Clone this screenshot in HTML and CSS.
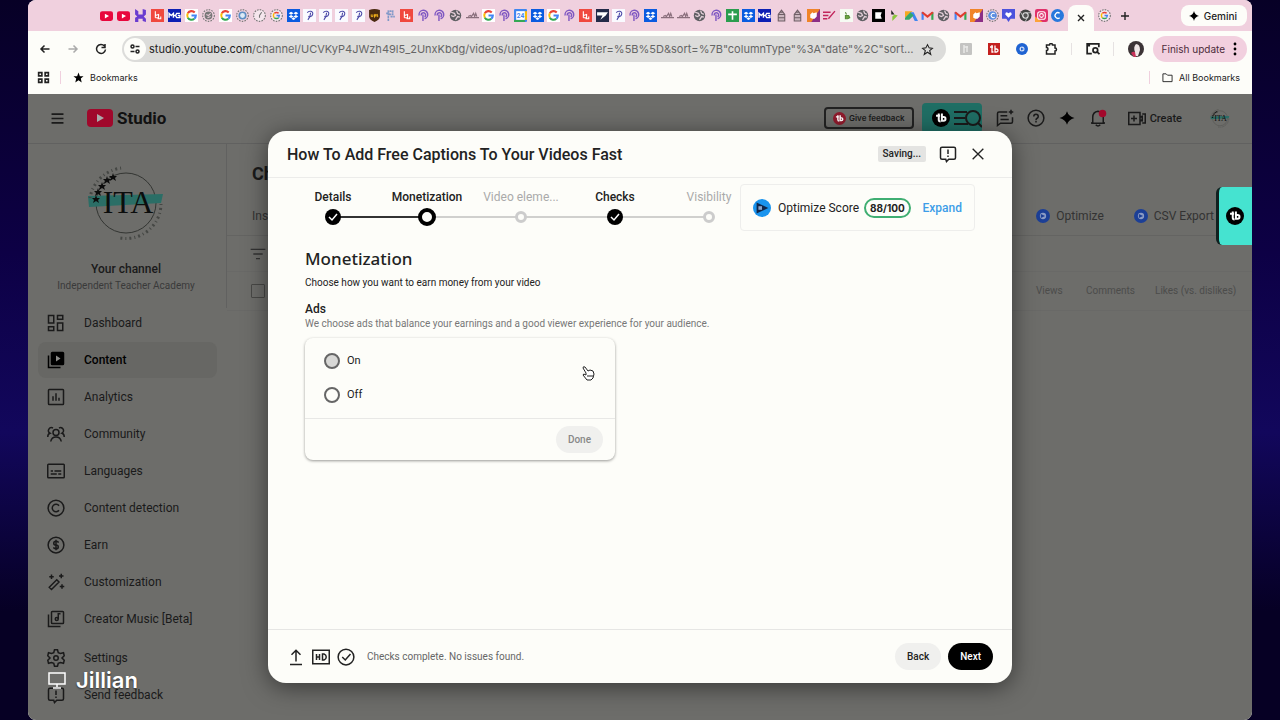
FILE: index.html
```
<!DOCTYPE html>
<html lang="en">
<head>
    <meta charset="UTF-8">
    <meta name="viewport" content="width=device-width, initial-scale=1.0">
    <title>Channel content - YouTube Studio</title>
    <link rel="stylesheet" href="styles.css">
</head>
<body>
    <!-- Favicons and logos used several times -->
    <svg class="sprite" aria-hidden="true">
        <symbol id="f-yt" viewBox="0 0 12 12"><rect y="2" width="12" height="9" rx="2" fill="#e8063c"/><path d="M4.500 4.300v4.400L8.300 6.500z" fill="#fff"/></symbol>
        <symbol id="f-h" viewBox="0 0 12 12"><path d="M1 0l3 2v3h4V2L8 0l3 1v4L9 7H3L1 5zM1 12V8l2-1h6l2 2v3l-3-1V9H4v3z" fill="#6a3bd0"/></symbol>
        <symbol id="f-red" viewBox="0 0 12 12"><rect width="12" height="12" fill="#f0483e"/><path d="M4 2v6M4 6l3-1v3H4M6 9h3V7" fill="none" stroke="#fff"/></symbol>
        <symbol id="f-mg" viewBox="0 0 12 12"><rect width="12" height="12" fill="#0d1fb4"/><path d="M1 8V4l2 2 2-2v4M5 6h2M11 4H8L7 6l1 2h3V6H9" fill="none" stroke="#fff" stroke-width="1.300"/></symbol>
        <symbol id="f-g" viewBox="0 0 12 12"><rect width="12" height="12" fill="#fff"/><g fill="none" stroke-width="1.900"><path d="M9 3.200A4 4 0 0 0 2.600 4" stroke="#ea4335"/><path d="M2.600 4a4 4 0 0 0 0 4" stroke="#fbbc05"/><path d="M2.600 8A4 4 0 0 0 8.600 9" stroke="#34a853"/><path d="M8.600 9A4 4 0 0 0 10 6H6" stroke="#4285f4"/></g></symbol>
        <symbol id="f-dash" viewBox="0 0 12 12"><circle cx="6" cy="6" r="5.400" fill="none" stroke="#777" stroke-dasharray="1.500 1"/><circle cx="6" cy="6" r="3.600" fill="#777"/><path d="M4 5l2 1 2-2M5 8l3-1" stroke="#e3c6d3" fill="none"/></symbol>
        <symbol id="f-dashblue" viewBox="0 0 12 12"><circle cx="6" cy="6" r="5.400" fill="none" stroke="#777" stroke-dasharray="1.500 1"/><circle cx="6" cy="6" r="3" fill="#dceaf6" stroke="#5d8fc4" stroke-width="1.500"/></symbol>
        <symbol id="f-clock" viewBox="0 0 12 12"><circle cx="6" cy="6" r="5.400" fill="#f5e6ed" stroke="#777" stroke-dasharray="1.500 1"/><path d="M8 3L6 6v2" stroke="#777" fill="none"/></symbol>
        <symbol id="f-dashg" viewBox="0 0 12 12"><circle cx="6" cy="6" r="5.400" fill="#f5e6ed" stroke="#777" stroke-dasharray="1.500 1"/><g fill="none" stroke-width="1.300"><path d="M8 4a2.800 2.800 0 0 0-4 0" stroke="#ea4335"/><path d="M4 4a2.800 2.800 0 0 0 0 4" stroke="#fbbc05"/><path d="M4 8a2.800 2.800 0 0 0 4 0" stroke="#34a853"/><path d="M8 8l.6-2H6" stroke="#4285f4"/></g></symbol>
        <symbol id="f-box" viewBox="0 0 12 12"><rect width="12" height="12" fill="#0a5be0"/><path d="M3.800 2.500L6 4 3.800 5.400 1.600 4zM8.200 2.500L10.400 4 8.200 5.400 6 4zM3.800 5.600L6 7 3.800 8.400 1.600 7zM8.200 5.600L10.400 7 8.200 8.400 6 7zM6 7.600l2 1.300-2 1.300-2-1.300z" fill="#fff"/></symbol>
        <symbol id="f-p" viewBox="0 0 12 12"><rect width="12" height="12" fill="#fafaff"/><path d="M4 3.500c1-2 5.500-2 5 1S6 7.500 5 6.500M7 3.500Q7 7 4.500 10" fill="none" stroke="#4c4aa8"/></symbol>
        <symbol id="f-ups" viewBox="0 0 12 12"><path d="M1 1q5-2 10 0v6q0 3-5 5-5-2-5-5z" fill="#4a2a10"/><path d="M3 5v2h1.500V5M6 8V5h1v2M9 5H8v1h1v1H8" fill="none" stroke="#f3b21b" stroke-width=".9"/></symbol>
        <symbol id="f-pf" viewBox="0 0 12 12"><path d="M4 11V2h4v3H4M2 4h3M6 7h4" fill="none" stroke="#7f98c8" stroke-width="1.500" stroke-dasharray="2 .5"/></symbol>
        <symbol id="f-pod" viewBox="0 0 12 12"><path d="M2 6a4 4 0 1 1 5 3M4 6a2 2 0 1 1 3 1.200M5.500 5v6" fill="none" stroke="#7e57c2" stroke-width="1.300"/></symbol>
        <symbol id="f-globe" viewBox="0 0 12 12"><circle cx="6" cy="6" r="5.300" fill="#5f5f63"/><path d="M2 3l3 1 1 2-2 1-2-1M7 1.500L8 4l2 1M6 10l2-3 2 .5" fill="none" stroke="#e3cfd8" stroke-width="1.200"/></symbol>
        <symbol id="f-sig" viewBox="0 0 12 12"><path d="M0 8h12M2 7l2-1 1 1 2-3 1 3 1-3 1 3" fill="none" stroke="#8a6f7c" stroke-width="1.100"/></symbol>
        <symbol id="f-cal" viewBox="0 0 12 12"><rect width="12" height="12" rx="1" fill="#3f86f0"/><path d="M10 2h2v8h-2z" fill="#fbbc05"/><path d="M0 10h10v2H0z" fill="#34a853"/><rect x="2" y="2" width="8" height="8" fill="#fff"/><text x="6" y="8.500" text-anchor="middle" font-family="Roboto, sans-serif" font-size="6" font-weight="700" fill="#3f86f0">24</text></symbol>
        <symbol id="f-usps" viewBox="0 0 12 12"><rect width="12" height="12" fill="#232a48"/><path d="M1 3h10L9 6 4 10l2-4H1z" fill="#fff"/></symbol>
        <symbol id="f-sheet" viewBox="0 0 12 12"><rect width="12" height="12" fill="#2a9d4e"/><path d="M6 2v8M2 5h8" stroke="#fff" stroke-width="1.500"/></symbol>
        <symbol id="f-house" viewBox="0 0 12 12"><path d="M3 11V5l3-4 3 4v6zM3 5h6M3 8h6M5 3h3" fill="#cbb6bf" stroke="#6f5f66"/></symbol>
        <symbol id="f-orange" viewBox="0 0 12 12"><rect width="12" height="12" fill="#f08428"/><path d="M12 0v12H4z" fill="#8c2e86"/><path d="M3 5l2-2 1 1 3-1v4l-2 2H5L3 8z" fill="#fff"/></symbol>
        <symbol id="f-pen" viewBox="0 0 12 12"><path d="M0 3h7M0 6h5M0 9h4M5 9l6-7" fill="none" stroke="#c2255c" stroke-width="1.300"/></symbol>
        <symbol id="f-leaf" viewBox="0 0 12 12"><rect width="12" height="12" fill="#f6fbf3"/><path d="M5 3l1 2M5 6h3l1 2-2 1H5z" stroke="#578b39" fill="#6ca63f"/></symbol>
        <symbol id="f-black" viewBox="0 0 12 12"><rect width="12" height="12" fill="#000"/><path d="M3 3h6l-1 3 1 3H3z" fill="#fff"/></symbol>
        <symbol id="f-arrow" viewBox="0 0 12 12"><path d="M3 1l3 4H3z" fill="#222"/><path d="M4 11l5-5-3-1-2 2z" fill="#8cc63f"/></symbol>
        <symbol id="f-maps" viewBox="0 0 12 12"><path d="M0 2h7L0 8z" fill="#f6a821"/><path d="M5 3h3l4 8H9z" fill="#3f86f0"/><path d="M0 8l5-5 3 3-4 4H0z" fill="#36a76a"/></symbol>
        <symbol id="f-gmail" viewBox="0 0 12 12"><path d="M1.500 10V3" stroke="#4285f4" stroke-width="2"/><path d="M10.500 10V3" stroke="#34a853" stroke-width="2"/><path d="M1 3l5 4 5-4" fill="none" stroke="#e23c30" stroke-width="2"/></symbol>
        <symbol id="f-cblue" viewBox="0 0 12 12"><circle cx="6" cy="6" r="5.400" fill="none" stroke="#777" stroke-dasharray="1.500 1"/><circle cx="6" cy="6" r="4" fill="#5a8ee0"/><path d="M8 4.500a2 2 0 1 0 0 3" fill="none" stroke="#fff"/></symbol>
        <symbol id="f-heart" viewBox="0 0 12 12"><path d="M0 0h12v9H8l-2 3-2-3H0z" fill="#4b52dd"/><path d="M6 8L3 5q0-2 1.500-2L6 4l1.500-1Q9 3 9 5z" fill="#fff"/></symbol>
        <symbol id="f-chrome" viewBox="0 0 12 12"><circle cx="6" cy="6" r="5.500" fill="#444"/><circle cx="6" cy="6" r="2.500" fill="#555" stroke="#ddd"/><path d="M6 3.500h5M4 7.500L1.500 3M8 7.500L5.500 12" stroke="#ddd" stroke-width=".7"/></symbol>
        <symbol id="f-insta" viewBox="0 0 12 12"><rect width="12" height="12" rx="2" fill="#e0306a"/><path d="M0 12V7l7 5z" fill="#fca23a"/><rect x="2.500" y="2.500" width="7" height="7" rx="2" fill="none" stroke="#fff"/><circle cx="6" cy="6" r="1.700" fill="none" stroke="#fff"/></symbol>
        <symbol id="f-canva" viewBox="0 0 12 12"><circle cx="6" cy="6" r="6" fill="#2878dc"/><path d="M8 4a2.600 2.600 0 1 0 0 4" fill="none" stroke="#fff" stroke-width="1.200"/></symbol>
        <symbol id="tb" viewBox="0 0 20 20"><circle cx="10" cy="10" r="10"/><path d="M7.500 5v7q0 2 2 2M4.500 7.500H9M11 5v8h2a2 2 0 0 0 0-4h-2" fill="none" stroke="#fff" stroke-width="2.200"/></symbol>
        <symbol id="vid" viewBox="0 0 20 20"><circle cx="10" cy="10" r="10" fill="#1c3f96"/><circle cx="10" cy="10" r="4.500" fill="#8b9bc4"/><path d="M7 7l6 3-6 3z" fill="#1c3f96"/></symbol>
        <symbol id="feedback" viewBox="0 0 24 24"><path d="M4 3h16a2 2 0 0 1 2 2v12a2 2 0 0 1-2 2h-7l-3 3-1-3H4a2 2 0 0 1-2-2V5a2 2 0 0 1 2-2zM12 6v6M12 14v2"/></symbol>
        <symbol id="ita" viewBox="0 0 80 80">
            <circle cx="40" cy="41" r="30" fill="none" stroke="#333532" stroke-width="1"/>
            <path d="M2 34l75-2-2 9-72 4z" fill="#2b6e66"/>
            <path d="M4 36A36 36 0 0 1 36 6M75 42A35 35 0 0 1 34 76" fill="none" stroke="#454744" stroke-width="3" stroke-dasharray="1 3 2 3"/>
            <path d="M10 33l1 3h3l-2 2 1 3-3-2-3 2 1-3-2-2h3zM12 26l1 3h3l-2 2 1 3-3-2-3 2 1-3-2-2h3zM16 20l1 3h3l-2 2 1 3-3-2-3 2 1-3-2-2h3zM21 14l1 3h3l-2 2 1 3-3-2-3 2 1-3-2-2h3zM27 11l1 3h3l-2 2 1 3-3-2-3 2 1-3-2-2h3z" fill="#0c0c0c"/>
            <text x="42" y="51" text-anchor="middle" font-family="Liberation Serif, serif" font-size="32" fill="#0b0d0d">ITA</text>
        </symbol>
    </svg>

    <div class="browser">
        <div class="tab-strip">
            <nav class="pinned">
                <a href="#"><svg><use href="#f-yt"/></svg></a>
                <a href="#"><svg><use href="#f-yt"/></svg></a>
                <a href="#"><svg><use href="#f-h"/></svg></a>
                <a href="#"><svg><use href="#f-red"/></svg></a>
                <a href="#"><svg><use href="#f-mg"/></svg></a>
                <a href="#"><svg><use href="#f-g"/></svg></a>
                <a href="#"><svg><use href="#f-dash"/></svg></a>
                <a href="#"><svg><use href="#f-g"/></svg></a>
                <a href="#"><svg><use href="#f-dashblue"/></svg></a>
                <a href="#"><svg><use href="#f-clock"/></svg></a>
                <a href="#"><svg><use href="#f-dashg"/></svg></a>
            </nav>
            <nav class="tabs">
                <a href="#"><svg><use href="#f-box"/></svg></a>
                <a href="#"><svg><use href="#f-p"/></svg></a>
                <a href="#"><svg><use href="#f-p"/></svg></a>
                <a href="#"><svg><use href="#f-p"/></svg></a>
                <a href="#"><svg><use href="#f-p"/></svg></a>
                <a href="#"><svg><use href="#f-ups"/></svg></a>
                <a href="#"><svg><use href="#f-pf"/></svg></a>
                <a href="#"><svg><use href="#f-red"/></svg></a>
                <a href="#"><svg><use href="#f-pod"/></svg></a>
                <a href="#"><svg><use href="#f-pod"/></svg></a>
                <a href="#"><svg><use href="#f-globe"/></svg></a>
                <a href="#"><svg><use href="#f-sig"/></svg></a>
                <a href="#"><svg><use href="#f-g"/></svg></a>
                <a href="#"><svg><use href="#f-pod"/></svg></a>
                <a href="#"><svg><use href="#f-cal"/></svg></a>
                <a href="#"><svg><use href="#f-box"/></svg></a>
                <a href="#"><svg><use href="#f-g"/></svg></a>
                <a href="#"><svg><use href="#f-pod"/></svg></a>
                <a href="#"><svg><use href="#f-red"/></svg></a>
                <a href="#"><svg><use href="#f-usps"/></svg></a>
                <a href="#"><svg><use href="#f-p"/></svg></a>
                <a href="#"><svg><use href="#f-pod"/></svg></a>
                <a href="#"><svg><use href="#f-box"/></svg></a>
                <a href="#"><svg><use href="#f-sig"/></svg></a>
                <a href="#"><svg><use href="#f-sig"/></svg></a>
                <a href="#"><svg><use href="#f-globe"/></svg></a>
                <a href="#"><svg><use href="#f-pod"/></svg></a>
                <a href="#"><svg><use href="#f-sheet"/></svg></a>
                <a href="#"><svg><use href="#f-box"/></svg></a>
                <a href="#"><svg><use href="#f-mg"/></svg></a>
                <a href="#"><svg><use href="#f-house"/></svg></a>
                <a href="#"><svg><use href="#f-house"/></svg></a>
                <a href="#"><svg><use href="#f-orange"/></svg></a>
                <a href="#"><svg><use href="#f-pen"/></svg></a>
                <a href="#"><svg><use href="#f-leaf"/></svg></a>
                <a href="#"><svg><use href="#f-globe"/></svg></a>
                <a href="#"><svg><use href="#f-black"/></svg></a>
                <a href="#"><svg><use href="#f-arrow"/></svg></a>
                <a href="#"><svg><use href="#f-maps"/></svg></a>
                <a href="#"><svg><use href="#f-gmail"/></svg></a>
                <a href="#"><svg><use href="#f-globe"/></svg></a>
                <a href="#"><svg><use href="#f-gmail"/></svg></a>
                <a href="#"><svg><use href="#f-orange"/></svg></a>
                <a href="#"><svg><use href="#f-cblue"/></svg></a>
                <a href="#"><svg><use href="#f-heart"/></svg></a>
                <a href="#"><svg><use href="#f-chrome"/></svg></a>
                <a href="#"><svg><use href="#f-insta"/></svg></a>
                <a href="#"><svg><use href="#f-canva"/></svg></a>
            </nav>
            <button class="tab-active" aria-label="Close tab"><svg viewBox="0 0 12 12"><path d="M3 3l6 6M9 3l-6 6"/></svg></button>
            <a class="tab-last" href="#"><svg><use href="#f-dashg"/></svg></a>
            <button class="tab-new" aria-label="New tab"><svg viewBox="0 0 12 12"><path d="M6 2v8M2 6h8"/></svg></button>
            <button class="gemini"><svg viewBox="0 0 12 12"><path d="M6 0q1 5 6 6-5 1-6 6-1-5-6-6 5-1 6-6z"/></svg>Gemini</button>
        </div>

        <div class="toolbar">
            <button class="icon-btn" aria-label="Back"><svg class="line" viewBox="0 0 24 24"><path d="M21 12H4M11 5l-7 7 7 7"/></svg></button>
            <button class="icon-btn faded" aria-label="Forward"><svg class="line" viewBox="0 0 24 24"><path d="M3 12h17M13 5l7 7-7 7"/></svg></button>
            <button class="icon-btn" aria-label="Reload"><svg class="line" viewBox="0 0 24 24"><path d="M19 6a9 9 0 1 0 2 7M20 2v7h-7"/></svg></button>
            <div class="omnibox">
                <span class="site-info"><svg class="line" viewBox="0 0 24 24"><circle cx="7" cy="7" r="3"/><path d="M13 7h8M3 17h8"/><circle cx="17" cy="17" r="3"/></svg></span>
                <span class="url"><b>studio.youtube.com</b>/channel/UCVKyP4JWzh49l5_2UnxKbdg/videos/upload?d=ud&amp;filter=%5B%5D&amp;sort=%7B"columnType"%3A"date"%2C"sortOr...</span>
                <svg class="line star" viewBox="0 0 24 24"><path d="M12 3l3 6 6 1-5 4 2 7-6-4-6 4 2-7-5-4 6-1z"/></svg>
            </div>
            <div class="extensions">
                <svg viewBox="0 0 12 12"><rect width="12" height="12" rx="1" fill="#c4c4c2"/><path d="M4 2v8M7 3v6M4 4h4" stroke="#e8e8e6" stroke-width="1.500"/></svg>
                <svg viewBox="0 0 12 12"><rect width="12" height="12" fill="#c4201f"/><path d="M4 2v7h1.500M2 4h3M7 2.500V9h1.500a1.500 1.500 0 0 0 0-3H7" fill="none" stroke="#fff" stroke-width="1.300"/></svg>
                <svg viewBox="0 0 12 12"><circle cx="6" cy="6" r="6" fill="#1f63d2"/><circle cx="6" cy="6" r="2.500" fill="#cfdcf5"/><path d="M5 4.500L8 6 5 7.500z" fill="#1f63d2"/></svg>
                <svg class="line" viewBox="0 0 24 24"><path d="M3 4h6q0-3 3-3t3 3h5v6q3 0 3 3t-3 3v6H3v-7q3 0 3-3t-3-3z"/></svg>
            </div>
            <svg class="line side-search" viewBox="0 0 24 24"><path d="M10 20H2V3h20v6M2 6h5"/><circle cx="16" cy="14" r="4"/><path d="M19 17l4 4"/></svg>
            <svg class="profile" viewBox="0 0 16 16"><circle cx="8" cy="8" r="8" fill="#3c3436"/><path d="M5 15q-1-3 2-4-2-5 1-8 4 0 4 6l-2 6z" fill="#efe6e6"/><path d="M3 12q2-2 4-1l1 5H6z" fill="#c83259"/></svg>
            <button class="update">Finish update<svg viewBox="0 0 4 14"><circle cx="2" cy="2" r="1.400"/><circle cx="2" cy="7" r="1.400"/><circle cx="2" cy="12" r="1.400"/></svg></button>
        </div>

        <div class="bookmarks">
            <svg class="line apps" viewBox="0 0 24 24"><path d="M3 3h6v6H3zM15 3h6v6h-6zM3 15h6v6H3zM15 15h6v6h-6z"/></svg>
            <a class="mark first" href="#"><svg viewBox="0 0 24 24"><path d="M12 1l3 8h8l-6 5 2 9-7-5-7 5 2-9-6-5h8z"/></svg>Bookmarks</a>
            <a class="mark all" href="#"><svg class="line" viewBox="0 0 24 24"><path d="M2 4h7l3 3h10v14H2z"/></svg>All Bookmarks</a>
        </div>

        <div class="page">
            <header class="studio-header">
                <button class="menu-btn" aria-label="Menu"><svg class="line" viewBox="0 0 24 24"><path d="M1 4h22M1 12h22M1 20h22"/></svg></button>
                <a class="logo" href="#"><svg viewBox="0 0 26 18"><rect width="26" height="18" rx="4" fill="#a0082b"/><path d="M10 5v8l7-4z" fill="#aaa"/></svg>Studio</a>
                <button class="give-feedback"><svg fill="#8e1a2c"><use href="#tb"/></svg>Give feedback</button>
                <div class="tb-search">
                    <svg class="tb-logo"><use href="#tb"/></svg>
                    <svg class="line tb-lens" viewBox="0 0 28 20"><path d="M0 4h13M0 10h11M0 16h14M24 15l4 4"/><circle cx="19" cy="10" r="7"/></svg>
                </div>
                <div class="header-icons">
                    <svg class="line" viewBox="0 0 24 24"><path d="M15 4H4a2 2 0 0 0-2 2v16l4-3h14a2 2 0 0 0 2-2v-6M6 9h9M6 14h11M20 1v6M17 4h6"/></svg>
                    <svg class="line" viewBox="0 0 24 24"><circle cx="12" cy="12" r="10.500"/><path d="M9 10q0-3 3-3t3 3q0 1.500-1.500 2.300T12 15M12 16v2"/></svg>
                    <svg viewBox="0 0 24 24"><path d="M12 3q2 7 10 9-8 2-10 9-2-7-10-9 8-2 10-9z"/></svg>
                    <svg class="line" viewBox="0 0 24 24"><path d="M5 18v-7q0-7 7-8 7 1 7 8v7l2 1H3zM9 21q3 3 6 0"/><circle class="dot" cx="18" cy="6" r="5"/></svg>
                </div>
                <button class="create"><svg class="line" viewBox="0 0 24 20"><path d="M1 2h15v16H1zM16 8l3-1v6l-3-1M19 4h4v12h-4M8 6v8M4 10h8"/></svg>Create</button>
                <svg class="avatar-small"><use href="#ita"/></svg>
            </header>

            <div class="studio-body">
                <aside class="sidebar">
                    <div class="channel">
                        <svg><use href="#ita"/></svg>
                        <strong>Your channel</strong>
                        <span>Independent Teacher Academy</span>
                    </div>
                    <ul class="side-menu">
                        <li><a href="#"><svg class="line" viewBox="0 0 24 24"><path d="M2 2h7v10H2zM14 2h7v5h-7zM2 17h7v5H2zM14 12h7v10h-7z"/></svg>Dashboard</a></li>
                        <li class="active"><a href="#"><svg class="line" viewBox="0 0 24 24"><path d="M2 6v16h16"/><rect x="6" y="2" width="16" height="16" rx="1" fill="#000"/><path d="M12 6v8l6-4z" fill="#8b8b88" stroke="none"/></svg>Content</a></li>
                        <li><a href="#"><svg class="line" viewBox="0 0 24 24"><rect x="2" y="2" width="20" height="20" rx="1"/><path d="M8 11v6M12 7v10M16 13v4"/></svg>Analytics</a></li>
                        <li><a href="#"><svg class="line" viewBox="0 0 24 24"><circle cx="12" cy="10" r="4"/><path d="M5 22q1-6 7-6t7 6M8 4a4 4 0 0 0-4 7q-3 1-3 5M16 4a4 4 0 0 1 4 7q3 1 3 5"/></svg>Community</a></li>
                        <li><a href="#"><svg class="line" viewBox="0 0 24 24"><rect x="1" y="3" width="22" height="18" rx="1"/><path d="M5 12h3M10 12h9M5 16h8M15 16h4"/></svg>Languages</a></li>
                        <li><a href="#"><svg class="line" viewBox="0 0 24 24"><circle cx="12" cy="12" r="10.500"/><path d="M16 9a5 5 0 1 0 0 6"/></svg>Content detection</a></li>
                        <li><a href="#"><svg class="line" viewBox="0 0 24 24"><circle cx="12" cy="12" r="10.500"/><path d="M15 9q0-2-3-2t-3 2.500 3 2.500 3 2.500-3 2.500-3-2M12 5v14"/></svg>Earn</a></li>
                        <li><a href="#"><svg class="line" viewBox="0 0 24 24"><path d="M3 19L13 9l3 3L6 22zM6 2v6M3 5h6M19 1v6M16 4h6M20 15v6M17 18h6"/></svg>Customization</a></li>
                        <li><a href="#"><svg class="line" viewBox="0 0 24 24"><path d="M2 6v16h16"/><rect x="6" y="2" width="16" height="16" rx="1"/><path d="M15 12V5h3"/><circle cx="13" cy="12" r="2"/></svg>Creator Music [Beta]</a></li>
                    </ul>
                    <ul class="side-menu side-bottom">
                        <li><a href="#"><svg class="line" viewBox="0 0 24 24"><path d="M10 1h4l1 4 3 1 4-1 1 4-3 3 3 3-1 4-4-1-3 1-1 4h-4l-1-4-3-1-4 1-1-4 3-3-3-3 1-4 4 1 3-1z"/><circle cx="12" cy="12" r="3"/></svg>Settings</a></li>
                        <li><a href="#"><svg class="line"><use href="#feedback"/></svg>Send feedback</a></li>
                    </ul>
                </aside>

                <main class="content">
                    <h1>Channel content</h1>
                    <div class="content-tabs">
                        <a href="#">Inspiration</a>
                        <span class="tools">
                            <button><svg><use href="#vid"/></svg>Optimize</button>
                            <button><svg><use href="#vid"/></svg>CSV Export</button>
                        </span>
                    </div>
                    <div class="filter"><svg class="line" viewBox="0 0 24 24"><path d="M1 5h22M5 12h14M9 19h6"/></svg></div>
                    <table>
                        <thead>
                            <tr>
                                <th class="check"><input type="checkbox" aria-label="Select all"></th>
                                <th class="views">Views</th>
                                <th class="comments">Comments</th>
                                <th class="likes">Likes (vs. dislikes)</th>
                            </tr>
                        </thead>
                    </table>
                </main>
            </div>

            <button class="tb-tab" aria-label="Open panel"><svg><use href="#tb"/></svg></button>

            <div class="overlay">
                <section class="dialog" role="dialog" aria-labelledby="dialog-title">
                    <header class="dialog-header">
                        <h2 id="dialog-title">How To Add Free Captions To Your Videos Fast</h2>
                        <span class="saving">Saving...</span>
                        <button class="icon-btn" aria-label="Send feedback"><svg class="line"><use href="#feedback"/></svg></button>
                        <button class="icon-btn" aria-label="Close"><svg class="line" viewBox="0 0 24 24"><path d="M4 4l16 16M20 4L4 20"/></svg></button>
                    </header>

                    <div class="steps-row">
                        <ol class="steps">
                            <li class="done">Details<i><svg viewBox="0 0 16 16"><path d="M4 8l3 3 5-6"/></svg></i></li>
                            <li class="current">Monetization<i></i></li>
                            <li>Video eleme...<i></i></li>
                            <li class="done">Checks<i><svg viewBox="0 0 16 16"><path d="M4 8l3 3 5-6"/></svg></i></li>
                            <li>Visibility<i></i></li>
                        </ol>
                        <div class="score">
                            <svg viewBox="0 0 20 20"><circle cx="10" cy="10" r="10" fill="#1a94ee"/><path d="M4 4l13 6-13 6z" fill="#10264a"/><path d="M6 8h4v4H6z" fill="#8ea6c8"/></svg>
                            <span>Optimize Score</span>
                            <b>88/100</b>
                            <a href="#">Expand</a>
                        </div>
                    </div>

                    <div class="dialog-body">
                        <h3>Monetization</h3>
                        <p>Choose how you want to earn money from your video</p>
                        <h4>Ads</h4>
                        <p class="hint">We choose ads that balance your earnings and a good viewer experience for your audience.</p>
                        <form class="ads-card">
                            <div class="options">
                                <label for="adsOn"><input type="radio" id="adsOn" name="ads" class="pressed">On</label>
                                <label for="adsOff"><input type="radio" id="adsOff" name="ads">Off</label>
                            </div>
                            <div class="card-footer"><button type="button" class="pill" disabled>Done</button></div>
                            <svg class="cursor" viewBox="0 0 14 16"><path d="M5 8L2 3q0-2 2-1l3 4 2-1 3 1 1 3-1 4-2 2H6L2 10q0-2 3 0z"/><path d="M7 10v2M9 10v2M11 10v2"/></svg>
                        </form>
                    </div>

                    <footer class="dialog-footer">
                        <svg class="line" viewBox="0 0 24 24"><path d="M12 18V3M6 9l6-6 6 6M4 22h16"/></svg>
                        <svg class="line" viewBox="0 0 24 24"><path d="M1 3h22v18H1zM6 8v8M6 12h4M10 8v8M14 8v8h2q3-1 3-4t-3-4z"/></svg>
                        <svg class="line" viewBox="0 0 24 24"><circle cx="12" cy="12" r="10.500"/><path d="M7 12l4 4 7-8"/></svg>
                        <span>Checks complete. No issues found.</span>
                        <button class="pill">Back</button>
                        <button class="pill next">Next</button>
                    </footer>
                </section>
            </div>
        </div>
    </div>

    <div class="presenter"><svg viewBox="0 0 18 17"><path d="M1 1h16v11H1zM9 12v3M5 16h8"/></svg>Jillian</div>
</body>
</html>
```
FILE: styles.css
```
* {
    box-sizing: border-box;
}
body {
    margin: 0;
    padding: 0 28px;
    height: 100vh;
    overflow: hidden;
    font-family: Roboto, sans-serif;
    font-size: 12px;
    color: #222;
    background: linear-gradient(#070026, #0d0045 35%, #12075c 60%, #060024 85%);
}
button {
    font: inherit;
    color: inherit;
    border: none;
    background: none;
    padding: 0;
}
a {
    color: inherit;
    text-decoration: none;
}
ul, ol {
    list-style-type: none;
    margin: 0;
    padding: 0;
}
h1, h2, h3, h4, p {
    margin: 0;
}
svg {
    display: block;
    flex-shrink: 0;
}
.sprite {
    position: absolute;
    width: 0;
    height: 0;
}
.line {
    fill: none;
    stroke: currentColor;
    stroke-width: 2;
}
.browser {
    display: flex;
    flex-direction: column;
    height: 100%;
    border-radius: 8px;
    overflow: hidden;
    background-color: #fdfdf9;
}

/* Tab strip */
.tab-strip {
    display: flex;
    align-items: center;
    height: 31px;
    padding: 0 5px 0 70px;
    background-color: #f0d0de;
    font-family: Inter, sans-serif;
}
.pinned, .tabs {
    display: flex;
}
.pinned a {
    width: 17px;
}
.tabs {
    flex: 1;
}
.tabs a {
    flex: 1;
}
.tab-strip a svg {
    width: 13px;
    height: 13px;
    margin: 0 auto;
}
.tab-active {
    align-self: flex-end;
    width: 26px;
    height: 26px;
    margin-left: 2px;
    border-radius: 8px 8px 0 0;
    background-color: #fdfdf9;
}
.tab-active svg, .tab-new svg {
    width: 12px;
    height: 12px;
    margin: 0 auto;
    stroke: #222;
    stroke-width: 1.4;
}
.tab-last {
    margin-left: 4px;
}
.tab-new {
    margin: 0 50px 0 8px;
}
.gemini {
    display: flex;
    align-items: center;
    gap: 5px;
    height: 21px;
    padding: 0 10px 0 8px;
    border-radius: 8px;
    background-color: #fdfdf9;
    font-size: 10px;
    font-weight: 500;
}
.gemini svg {
    width: 10px;
    height: 10px;
}

/* Address bar */
.toolbar {
    display: flex;
    align-items: center;
    height: 36px;
    padding: 0 5px 0 11px;
    font-family: Inter, sans-serif;
}
.toolbar .icon-btn {
    width: 12px;
    margin-right: 16px;
}
.toolbar .icon-btn:nth-child(3) {
    margin-right: 15px;
}
.faded {
    color: #aaa;
}
.toolbar .icon-btn svg {
    width: 12px;
    height: 12px;
    stroke-width: 3;
}
.omnibox {
    flex: 1;
    min-width: 0;
    display: flex;
    align-items: center;
    gap: 3px;
    height: 26px;
    margin-right: 14px;
    padding: 0 12px 0 2px;
    border-radius: 13px;
    background-color: #dcdcda;
}
.site-info {
    width: 22px;
    height: 22px;
    padding: 5px;
    border-radius: 50%;
    background-color: #fdfdf9;
}
.site-info svg {
    width: 12px;
    height: 12px;
    stroke-width: 3;
}
.url {
    flex: 1;
    overflow: hidden;
    white-space: nowrap;
    text-overflow: ellipsis;
    font-size: 11px;
    line-height: 20px;
    color: #666;
}
.url b {
    font-weight: 400;
    color: #222;
}
.star {
    width: 13px;
    height: 13px;
}
.extensions {
    display: flex;
    gap: 16px;
    padding-right: 13px;
    border-right: 1px solid #e6e2e2;
}
.extensions svg {
    width: 12px;
    height: 12px;
}
.extensions .line {
    width: 14px;
    stroke-width: 3;
}
.side-search {
    width: 28px;
    height: 14px;
    margin: 0 14px;
    padding-right: 13px;
    stroke-width: 3;
    border-right: 1px solid #e6e2e2;
}
.profile {
    width: 16px;
    height: 16px;
    margin-right: 9px;
}
.update {
    display: flex;
    align-items: center;
    gap: 8px;
    height: 26px;
    padding: 0 10px 0 9px;
    border-radius: 13px;
    background-color: #f2d0df;
    font-size: 10px;
    color: #4c2b3a;
}
.update svg {
    width: 4px;
    height: 14px;
}
.bookmarks {
    display: flex;
    align-items: center;
    height: 27px;
    padding: 0 12px 7px 9px;
    font-family: Inter, sans-serif;
    font-size: 9px;
}
.apps {
    width: 13px;
    height: 13px;
    stroke-width: 3;
}
.mark {
    display: flex;
    align-items: center;
    gap: 6px;
    height: 13px;
    padding-left: 12px;
    border-left: 1px solid #f0d0de;
}
.mark svg {
    width: 11px;
    height: 11px;
}
.first {
    margin-left: 10px;
}
.all {
    margin-left: auto;
}

/* Studio page, dimmed behind the dialog */
.page {
    position: relative;
    flex: 1;
    display: flex;
    flex-direction: column;
    min-height: 0;
    background-color: #6d6d6a;
    color: #1a1a1a;
}
.studio-header {
    display: flex;
    align-items: center;
    height: 50px;
    padding: 0 22px 1px 23px;
    border-bottom: 1px solid #616160;
}
.menu-btn svg {
    width: 13px;
    height: 13px;
    stroke-width: 3;
}
.logo {
    display: flex;
    align-items: center;
    gap: 4px;
    margin: 0 auto 0 23px;
    font-size: 17px;
    font-weight: 700;
    color: #111;
}
.logo svg {
    width: 26px;
    height: 18px;
}
.give-feedback {
    display: flex;
    align-items: center;
    gap: 3px;
    height: 22px;
    padding: 0 7px;
    border: 2px solid #222;
    border-radius: 4px;
    font-family: Inter, sans-serif;
    font-size: 8px;
    font-weight: 600;
}
.give-feedback svg {
    width: 13px;
    height: 13px;
}
.tb-search {
    display: flex;
    align-items: center;
    gap: 4px;
    height: 30px;
    margin: 0 14px 0 8px;
    padding-left: 10px;
    border-radius: 4px;
    background-color: #1f6e64;
}
.tb-logo {
    width: 18px;
    height: 18px;
}
.tb-lens {
    width: 28px;
    height: 20px;
}
.header-icons {
    display: flex;
    gap: 13px;
    margin-right: 13px;
}
.header-icons svg {
    width: 18px;
    height: 18px;
}
.dot {
    fill: #a3082c;
    stroke: none;
}
.create {
    display: flex;
    align-items: center;
    gap: 4px;
    height: 26px;
    padding: 0 10px 0 8px;
    margin-right: 18px;
    font-size: 11px;
    font-weight: 500;
}
.create svg {
    width: 18px;
    height: 15px;
}
.avatar-small {
    width: 20px;
    height: 20px;
}
.studio-body {
    flex: 1;
    display: flex;
    min-height: 0;
}
.sidebar {
    width: 199px;
    background: linear-gradient(#616160, #616160) right top / 1px 164px no-repeat;
}
.channel {
    display: flex;
    flex-direction: column;
    align-items: center;
    height: 161px;
    padding: 18px 3px 0 0;
}
.channel svg {
    width: 80px;
    height: 80px;
}
.channel strong {
    margin-top: 19px;
    font-weight: 500;
    line-height: 16px;
}
.channel span {
    margin-top: 1px;
    font-size: 10px;
    line-height: 16px;
    color: #3a3a3a;
}
.side-menu li {
    height: 37px;
    padding: 0 10px;
}
.side-menu a {
    display: flex;
    align-items: center;
    gap: 19px;
    height: 36px;
    padding-left: 9px;
    border-radius: 8px;
}
.side-menu svg {
    width: 18px;
    height: 18px;
}
.active a {
    background-color: #676764;
    font-weight: 500;
    color: #000;
}
.side-bottom {
    margin-top: 2px;
}
.content {
    flex: 1;
    min-width: 0;
}
.content h1 {
    height: 52px;
    padding: 16px 0 0 25px;
    font-size: 18px;
    line-height: 28px;
}
.content-tabs {
    display: flex;
    align-items: center;
    height: 40px;
    padding: 0 38px 0 25px;
    border-bottom: 1px solid #646462;
    color: #333;
}
.tools {
    display: flex;
    gap: 30px;
    margin-left: auto;
}
.tools button {
    display: flex;
    align-items: center;
    gap: 6px;
}
.tools svg {
    width: 14px;
    height: 14px;
}
.filter {
    height: 36px;
    padding: 10px 0 0 23px;
    border-bottom: 1px solid #696967;
    color: #333;
}
.filter svg {
    width: 16px;
    height: 16px;
}
table {
    width: 100%;
    border-collapse: collapse;
    font-size: 10px;
    color: #4c4c4a;
}
th {
    height: 38px;
    padding: 0;
    font-weight: 400;
    text-align: left;
    border-bottom: 1px solid #696967;
}
.check {
    padding-left: 24px;
}
.check input {
    display: block;
    appearance: none;
    width: 14px;
    height: 14px;
    margin: 0;
    border: 1px solid #484846;
    border-radius: 1px;
}
.views {
    width: 50px;
}
.comments {
    width: 69px;
}
.likes {
    width: 97px;
}
.tb-tab {
    position: absolute;
    top: 93px;
    right: 0;
    width: 36px;
    height: 58px;
    padding-left: 7px;
    border-left: 3px solid #10201f;
    border-radius: 6px 0 0 6px;
    background-color: #45e3d0;
}
.tb-tab svg {
    width: 18px;
    height: 18px;
}

/* Upload dialog */
.overlay {
    position: absolute;
    inset: 37px 0;
    display: flex;
    justify-content: center;
    pointer-events: none;
}
.dialog {
    display: flex;
    flex-direction: column;
    width: 744px;
    max-width: 96%;
    border-radius: 18px;
    background-color: #fdfdf9;
    box-shadow: 0 4px 24px rgba(0, 0, 0, 0.5);
    color: #222;
    pointer-events: auto;
}
.dialog-header {
    display: flex;
    align-items: center;
    gap: 13px;
    height: 47px;
    padding: 0 26px 0 19px;
    border-bottom: 1px solid #ececea;
}
.dialog-header h2 {
    margin-right: auto;
    font-size: 16px;
    font-weight: 500;
}
.saving {
    padding: 0 5px;
    border-radius: 2px;
    background-color: #e4e4e2;
    font-size: 10px;
    font-weight: 500;
    line-height: 16px;
}
.dialog-header svg {
    width: 18px;
    height: 18px;
}
.dialog-header .icon-btn:last-child svg {
    width: 16px;
    height: 16px;
}
.steps-row {
    display: flex;
    align-items: flex-start;
    padding: 6px 37px 0 18px;
}
.steps {
    display: flex;
    padding-top: 5px;
}
.steps li {
    position: relative;
    display: flex;
    flex-direction: column;
    align-items: center;
    width: 94px;
    line-height: 16px;
    color: #aaa;
}
.steps li + li::before {
    content: "";
    position: absolute;
    top: 27px;
    right: 50%;
    width: 100%;
    height: 2px;
    background-color: #d0d0ce;
}
.steps li.current::before {
    background-color: #333;
}
.steps .done, .steps .current {
    font-weight: 500;
    color: #222;
}
.steps i {
    z-index: 1;
    width: 12px;
    height: 12px;
    margin-top: 6px;
    border: 3px solid #ccc;
    border-radius: 50%;
    background-color: #fdfdf9;
}
.steps .done i {
    width: 16px;
    height: 16px;
    margin-top: 4px;
    border: none;
    background-color: #000;
}
.steps .current i {
    width: 18px;
    height: 18px;
    margin-top: 3px;
    border: 4px solid #000;
}
.steps i svg {
    fill: none;
    stroke: #fff;
    stroke-width: 1.5;
}
.score {
    display: flex;
    align-items: center;
    flex: 1;
    height: 47px;
    margin-left: -16px;
    padding: 0 12px;
    border: 1px solid #eeeeec;
    border-radius: 4px;
    white-space: nowrap;
}
.score svg {
    width: 18px;
    height: 18px;
    margin-right: 7px;
}
.score b {
    margin: 0 auto 0 5px;
    padding: 0 4px;
    border: 2px solid #3fae72;
    border-radius: 10px;
    font-family: Inter, sans-serif;
    font-size: 10px;
    line-height: 16px;
}
.score a {
    font-weight: 500;
    color: #3d9de8;
}
.dialog-body {
    flex: 1;
    padding: 16px 37px 0;
    font-size: 10px;
    line-height: 16px;
}
.dialog-body h3 {
    font-family: "Noto Sans", sans-serif;
    font-size: 17px;
    font-weight: 500;
    line-height: 24px;
}
.dialog-body p {
    margin-top: 4px;
}
.dialog-body h4 {
    margin-top: 10px;
    font-size: 12px;
    font-weight: 500;
}
.dialog-body .hint {
    margin-top: -1px;
    color: #777;
}
.ads-card {
    position: relative;
    width: 310px;
    max-width: 100%;
    margin-top: 6px;
    border-radius: 8px;
    box-shadow: 0 1px 3px rgba(0, 0, 0, 0.4);
}
.options {
    display: flex;
    flex-direction: column;
    gap: 18px;
    padding: 15px 19px;
}
.options label {
    display: flex;
    align-items: center;
    gap: 7px;
    font-size: 11px;
    line-height: 16px;
}
.options input {
    appearance: none;
    width: 16px;
    height: 16px;
    margin: 0;
    border: 2px solid #666;
    border-radius: 50%;
}
.options .pressed {
    background-color: #d8d8d6;
}
.card-footer {
    display: flex;
    justify-content: flex-end;
    padding: 7px 12px;
    border-top: 1px solid #e8e8e6;
}
.pill {
    height: 27px;
    padding: 0 12px;
    border-radius: 14px;
    background-color: #f0f0ee;
    font-size: 10px;
    font-weight: 500;
}
.pill:disabled {
    color: #888;
}
.cursor {
    position: absolute;
    top: 27px;
    right: 20px;
    width: 14px;
    height: 16px;
    fill: #fff;
    stroke: #222;
}
.dialog-footer {
    display: flex;
    align-items: center;
    gap: 7px;
    height: 54px;
    padding: 0 19px;
    border-top: 1px solid #e6e6e4;
}
.dialog-footer svg {
    width: 18px;
    height: 18px;
}
.dialog-footer span {
    margin: 0 auto 0 5px;
    color: #666;
    font-size: 10px;
}
.next {
    background-color: #000;
    color: #fff;
}

/* Name of the person sharing the screen */
.presenter {
    position: absolute;
    bottom: 27px;
    left: 48px;
    display: flex;
    align-items: center;
    gap: 10px;
    font-family: Inter, sans-serif;
    font-size: 22px;
    font-weight: 600;
    line-height: 26px;
    color: #fff;
    text-shadow: 0 1px 2px rgba(0, 0, 0, 0.6);
}
.presenter svg {
    width: 18px;
    height: 17px;
    fill: none;
    stroke: #fff;
    stroke-width: 1.5;
}
```
